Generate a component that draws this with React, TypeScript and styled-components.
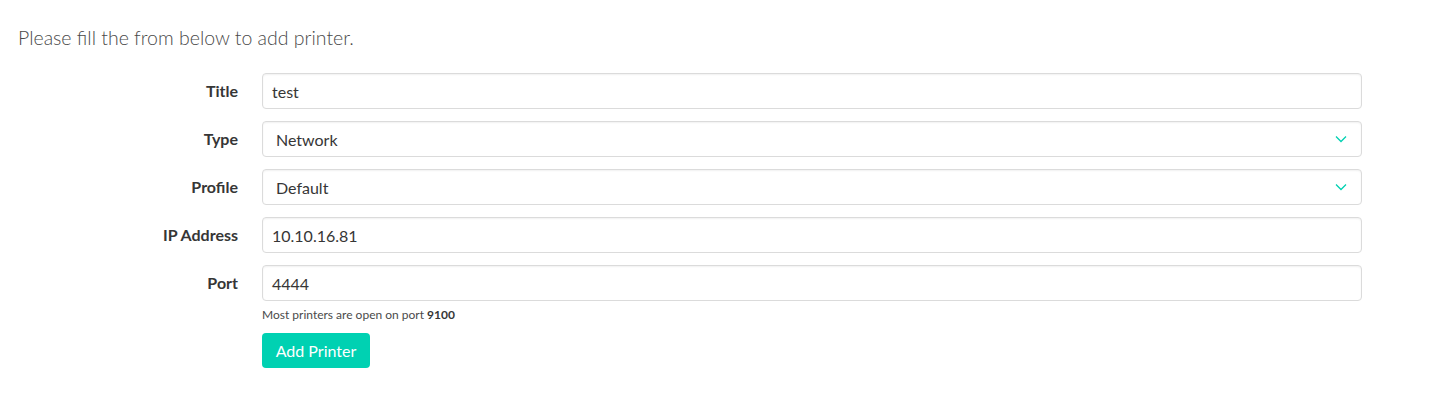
import React from "react";
import styled, { createGlobalStyle } from "styled-components";

const Global = createGlobalStyle`
  html, body { margin: 0; padding: 0; background: #fff; }
  body { font-family: Lato, "Open Sans", sans-serif; color: #363636; }
  * { box-sizing: border-box; }
`;

const Page = styled.div`
  padding: 26px 18px 0 18px;
`;

const Heading = styled.p`
  margin: 0 0 23px 0;
  font-size: 19.5px;
  font-weight: 300;
  color: #4a4a4a;
  line-height: 24px;
`;

const Form = styled.form`
  display: flex;
  flex-direction: column;
  gap: 12px;
`;

const Row = styled.div`
  display: flex;
  align-items: flex-start;
  gap: 24px;
`;

const Label = styled.label`
  width: 220px;
  flex: none;
  text-align: right;
  font-weight: 700;
  font-size: 16px;
  line-height: 36px;
  color: #363636;
`;

const Body = styled.div`
  width: 1100px;
  flex: none;
  display: flex;
  flex-direction: column;
`;

const Box = styled.div<{ $pad: number }>`
  position: relative;
  height: 36px;
  border: 1px solid #dbdbdb;
  border-radius: 4px;
  box-shadow: inset 0 1px 2px rgba(10, 10, 10, 0.06);
  display: flex;
  align-items: center;
  padding-left: ${(p) => p.$pad}px;
  font-size: 16px;
  color: #363636;
  background: #fff;
`;

const Chevron = styled.svg`
  position: absolute;
  right: 14px;
  top: 13px;
`;

const Help = styled.p`
  margin: 6px 0 0 0;
  font-size: 12px;
  color: #4a4a4a;
  line-height: 15px;
  b { color: #363636; }
`;

const Button = styled.button`
  margin-top: 11px;
  align-self: flex-start;
  height: 35px;
  width: 108px;
  border: none;
  border-radius: 4px;
  background: #00d1b2;
  color: #fff;
  font-family: inherit;
  font-size: 16px;
  cursor: pointer;
`;

const Input = ({ value }: { value: string }) => <Box $pad={9}>{value}</Box>;

const Select = ({ value }: { value: string }) => (
  <Box $pad={13}>
    {value}
    <Chevron width="12" height="8" viewBox="0 0 12 8">
      <polyline points="1,1.5 6,6.5 11,1.5" fill="none" stroke="#00d1b2" strokeWidth="1.3" />
    </Chevron>
  </Box>
);

export default function App() {
  return (
    <Page>
      <Global />
      <Heading>Please fill the from below to add printer.</Heading>
      <Form onSubmit={(e) => e.preventDefault()}>
        <Row>
          <Label>Title</Label>
          <Body><Input value="test" /></Body>
        </Row>
        <Row>
          <Label>Type</Label>
          <Body><Select value="Network" /></Body>
        </Row>
        <Row>
          <Label>Profile</Label>
          <Body><Select value="Default" /></Body>
        </Row>
        <Row>
          <Label>IP Address</Label>
          <Body><Input value="10.10.16.81" /></Body>
        </Row>
        <Row>
          <Label>Port</Label>
          <Body>
            <Input value="4444" />
            <Help>Most printers are open on port <b>9100</b></Help>
            <Button type="submit">Add Printer</Button>
          </Body>
        </Row>
      </Form>
    </Page>
  );
}
